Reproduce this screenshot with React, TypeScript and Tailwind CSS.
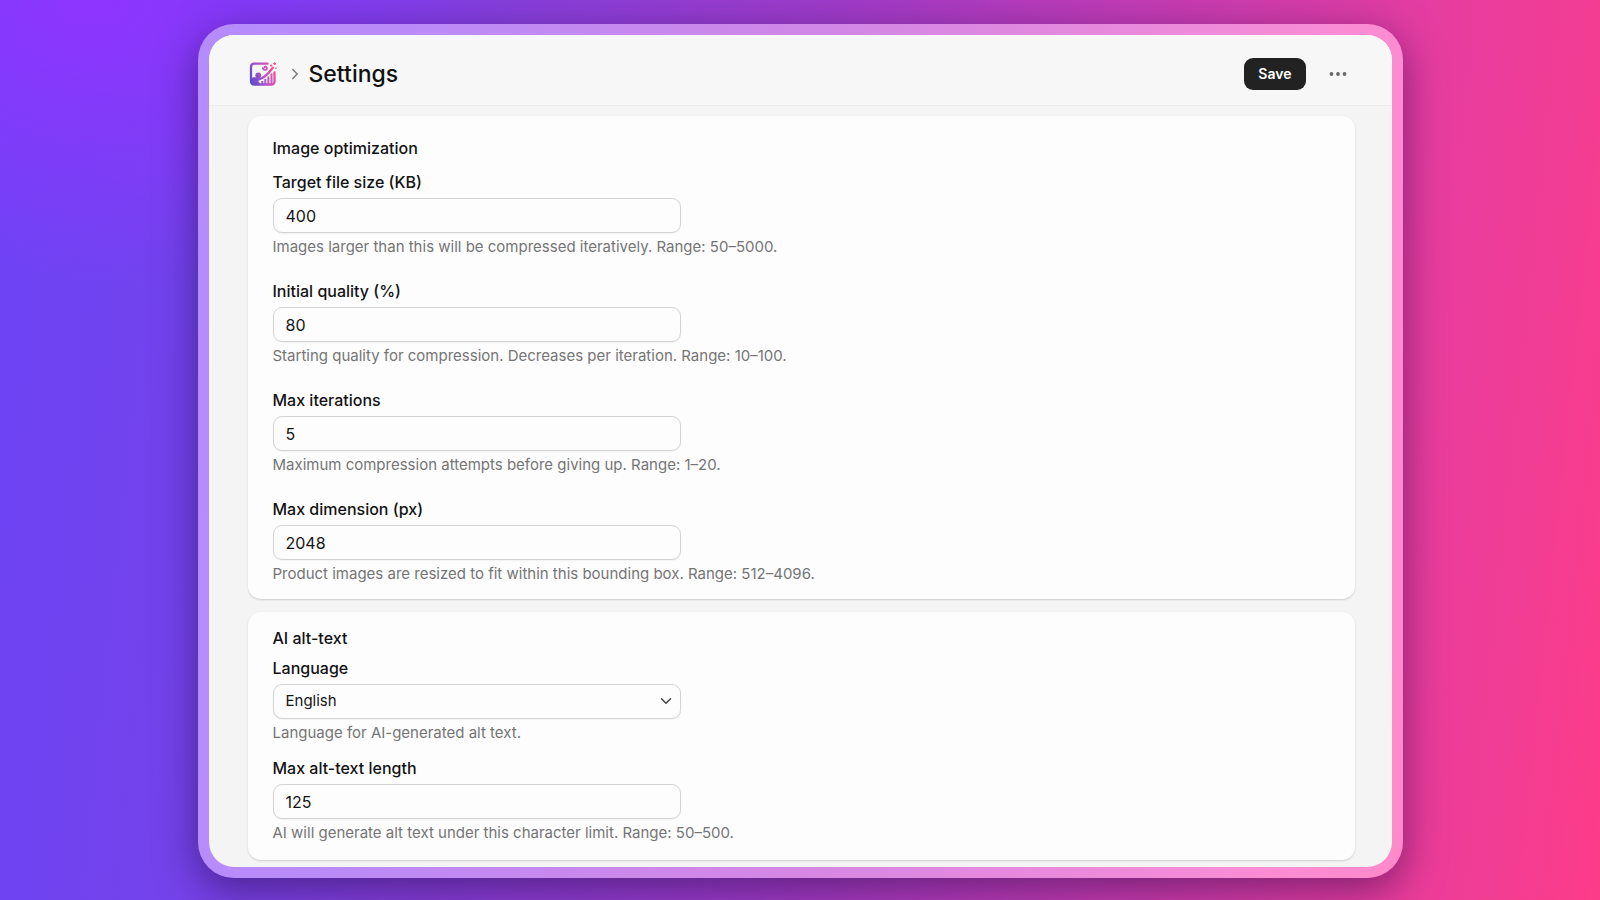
import { useId, useState } from 'react';
import { ChevronDown, ChevronRight } from 'lucide-react';

interface NumberFieldProps {
  label: string;
  help: string;
  value: string;
  onChange: (value: string) => void;
}

const controlClass =
  'block h-[35px] w-full appearance-none rounded-[9px] border border-[#d3d3d5] bg-[#fdfdfe] px-3 text-[#151515] shadow-[0_1px_1px_rgba(0,0,0,0.04)] outline-none focus:border-[#7c3aed]';
const headingClass = 'text-base leading-5 font-medium text-[#131313]';
const labelClass = 'mb-[6px] block w-fit text-base leading-5 font-medium text-[#131313]';
const helpClass = 'mt-1 text-[15px] leading-5 text-[#757575]';

// Number input with its label and range hint
function NumberField({ label, help, value, onChange }: NumberFieldProps) {
  const id = useId();
  return (
    <div>
      <label htmlFor={id} className={labelClass}>{label}</label>
      <div className="max-w-[408px]">
        <input id={id} type="text" inputMode="numeric" value={value} onChange={(e) => onChange(e.target.value)} className={`${controlClass} text-base`} />
      </div>
      <p className={helpClass}>{help}</p>
    </div>
  );
}

// App logo: picture frame with a rising chart and a wand
function AppLogo() {
  return (
    <svg viewBox="0 0 28 26" className="h-[26px] w-7" fill="none" aria-hidden="true">
      <defs>
        <linearGradient id="logo-gradient" x1="1" y1="18" x2="27" y2="9" gradientUnits="userSpaceOnUse">
          <stop offset="0" stopColor="#5b4fc8" />
          <stop offset="0.5" stopColor="#b552cd" />
          <stop offset="1" stopColor="#f8508a" />
        </linearGradient>
      </defs>
      <path d="M18.500 2.700H5A3 3 0 0 0 2 5.700V20.500A3 3 0 0 0 5 23.500H22.500A3 3 0 0 0 25.500 20.500V11.500" stroke="url(#logo-gradient)" strokeWidth="2.300" strokeLinecap="round" />
      <circle cx="9.300" cy="14.300" r="2.900" fill="url(#logo-gradient)" />
      <path d="M3 17.500C4.500 15 5.500 17.500 8 15.500L10.500 17L9 20L10.500 21.500V23H3Z" fill="url(#logo-gradient)" />
      <path d="M9.500 18.500C15 17.500 18.500 14 23.800 6.800" stroke="url(#logo-gradient)" strokeWidth="2.300" strokeLinecap="round" />
      <path d="M13.800 7.200C14.500 9.300 17.200 9.300 17.800 7.600C18.300 5.800 16.300 5 15.500 6.300" stroke="url(#logo-gradient)" strokeWidth="1.900" strokeLinecap="round" />
      <path d="M13.300 20V23M16.300 18V23M19.400 15.500V23M22.500 12.500V23" stroke="url(#logo-gradient)" strokeWidth="2" />
      <path d="M25.600 1.300V4.100M24.200 2.700H27M22.200 3.500V5.500M21.200 4.500H23.200M27 6.500V8" stroke="url(#logo-gradient)" strokeWidth="1.300" />
    </svg>
  );
}

export default function App() {
  const [fileSize, setFileSize] = useState('400');
  const [quality, setQuality] = useState('80');
  const [iterations, setIterations] = useState('5');
  const [dimension, setDimension] = useState('2048');
  const [language, setLanguage] = useState('English');
  const [altLength, setAltLength] = useState('125');

  return (
    <div className="min-h-screen bg-[radial-gradient(ellipse_26%_32%_at_6%_0%,#8f35ff_0%,transparent_100%),linear-gradient(96deg,#6c43f5_0%,#7343ec_14%,#a03bc8_50%,#e83d9f_86%,#f23d93_94%,#fd3b88_100%)] px-4 pt-6 pb-[22px] font-[Inter,sans-serif]">
      {/* Tinted frame around the settings window */}
      <div className="mx-auto max-w-[1205px] rounded-[36px] bg-[linear-gradient(96deg,#b58cfd_0%,#b98bf8_15%,#d287e6_50%,#fb8cd4_90%,#ff8aca_100%)] p-[11px] shadow-[0_12px_40px_rgba(25,5,60,0.5)]">
        <main className="overflow-hidden rounded-[25px] bg-[#f4f4f5]">
          <header className="flex items-center justify-between border-b border-[#ececed] bg-[#f7f7f7] pt-2 pr-[38px] pl-10">
            <div className="flex h-[62px] items-center">
              <AppLogo />
              <ChevronRight className="mr-[5px] ml-[9px] size-[18px] text-[#7c7c7c]" strokeWidth={2} />
              <h1 className="text-[23px] font-medium text-[#111111]">Settings</h1>
            </div>
            <div className="flex items-center gap-4">
              <button type="button" className="h-8 rounded-[9px] bg-[#222222] px-[14px] text-sm font-semibold text-white">Save</button>
              <button type="button" aria-label="More actions" className="flex size-8 items-center justify-center text-[#6a6a6a]">
                <svg viewBox="0 0 20 20" className="size-5" fill="currentColor" aria-hidden="true">
                  <circle cx="3.500" cy="10" r="1.900" />
                  <circle cx="10" cy="10" r="1.900" />
                  <circle cx="16.500" cy="10" r="1.900" />
                </svg>
              </button>
            </div>
          </header>

          <form className="flex flex-col gap-[13px] pt-[10px] pr-[37px] pb-[7px] pl-[39px]">
            {/* Image optimization card */}
            <section className="rounded-[13px] bg-[#fdfdfe] px-[25px] pt-[22px] pb-[15px] shadow-[0_1px_2px_rgba(0,0,0,0.16)]">
              <h2 className={`${headingClass} mb-[14px]`}>Image optimization</h2>
              <div className="flex flex-col gap-6">
                <NumberField label="Target file size (KB)" help="Images larger than this will be compressed iteratively. Range: 50–5000." value={fileSize} onChange={setFileSize} />
                <NumberField label="Initial quality (%)" help="Starting quality for compression. Decreases per iteration. Range: 10–100." value={quality} onChange={setQuality} />
                <NumberField label="Max iterations" help="Maximum compression attempts before giving up. Range: 1–20." value={iterations} onChange={setIterations} />
                <NumberField label="Max dimension (px)" help="Product images are resized to fit within this bounding box. Range: 512–4096." value={dimension} onChange={setDimension} />
              </div>
            </section>

            {/* AI alt-text card */}
            <section className="rounded-[13px] bg-[#fdfdfe] px-[25px] pt-4 pb-[17px] shadow-[0_1px_2px_rgba(0,0,0,0.16)]">
              <h2 className={`${headingClass} mb-[10px]`}>AI alt-text</h2>
              <div className="flex flex-col gap-[15px]">
                <div>
                  <label htmlFor="language" className={labelClass}>Language</label>
                  <div className="relative max-w-[408px]">
                    <select id="language" value={language} onChange={(e) => setLanguage(e.target.value)} className={`${controlClass} text-[15px]`}>
                      <option>English</option>
                    </select>
                    <ChevronDown className="pointer-events-none absolute top-2 right-[6px] size-[18px] text-[#444444]" strokeWidth={2} />
                  </div>
                  <p className={helpClass}>Language for AI-generated alt text.</p>
                </div>
                <NumberField label="Max alt-text length" help="AI will generate alt text under this character limit. Range: 50–500." value={altLength} onChange={setAltLength} />
              </div>
            </section>
          </form>
        </main>
      </div>
    </div>
  );
}
